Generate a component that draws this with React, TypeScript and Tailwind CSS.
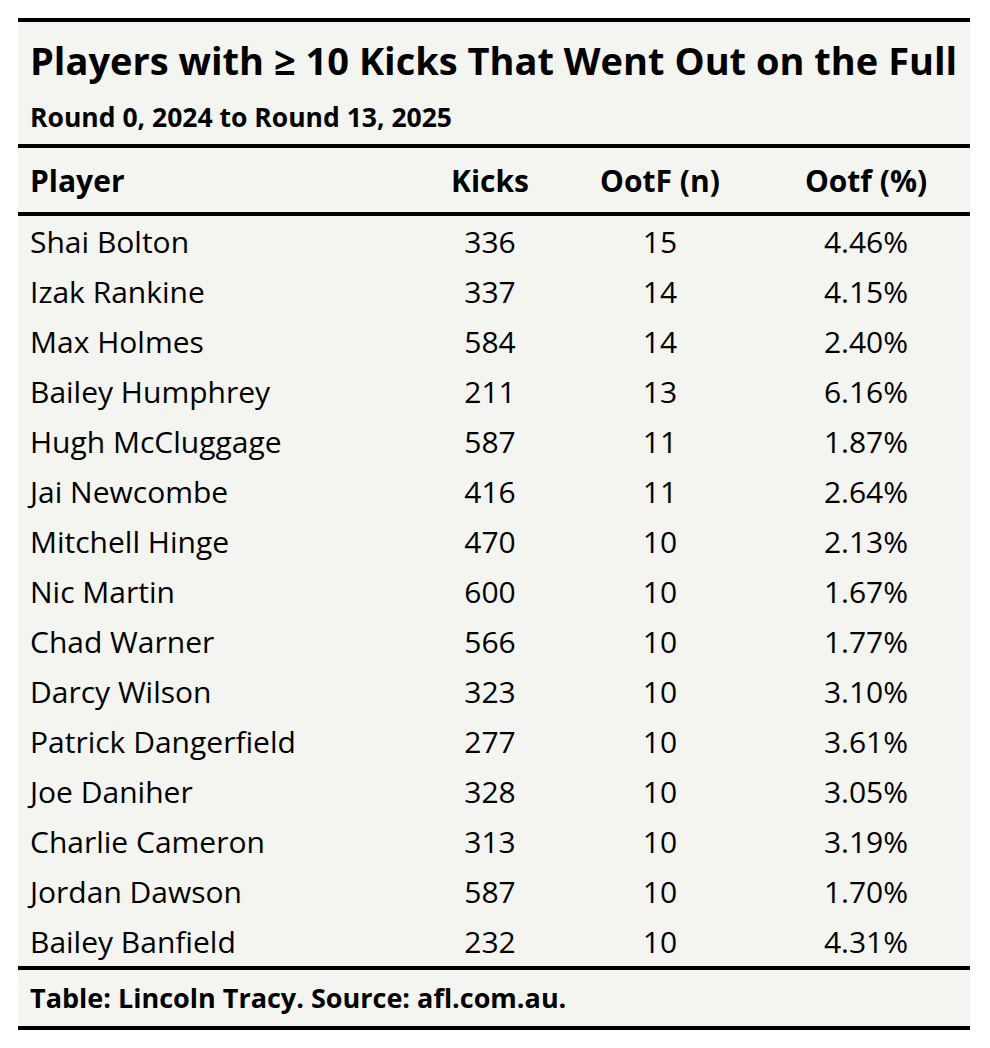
const rows: [string, number, number, string][] = [
  ['Shai Bolton', 336, 15, '4.46%'],
  ['Izak Rankine', 337, 14, '4.15%'],
  ['Max Holmes', 584, 14, '2.40%'],
  ['Bailey Humphrey', 211, 13, '6.16%'],
  ['Hugh McCluggage', 587, 11, '1.87%'],
  ['Jai Newcombe', 416, 11, '2.64%'],
  ['Mitchell Hinge', 470, 10, '2.13%'],
  ['Nic Martin', 600, 10, '1.67%'],
  ['Chad Warner', 566, 10, '1.77%'],
  ['Darcy Wilson', 323, 10, '3.10%'],
  ['Patrick Dangerfield', 277, 10, '3.61%'],
  ['Joe Daniher', 328, 10, '3.05%'],
  ['Charlie Cameron', 313, 10, '3.19%'],
  ['Jordan Dawson', 587, 10, '1.70%'],
  ['Bailey Banfield', 232, 10, '4.31%'],
];

const cols = 'grid grid-cols-[404px_136px_204px_208px]';

export default function App() {
  return (
    <div className="min-h-screen bg-white pt-[18px] px-[18px] font-['Open_Sans',sans-serif] text-black">
      <div className="w-[952px] bg-[#f4f4f0] border-y-4 border-black">
        {/* heading */}
        <div className="px-3 pt-[18px] pb-[13px] border-b-4 border-black">
          <h1 className="text-[38px] leading-[40px] font-bold whitespace-nowrap">
            Players with ≥ 10 Kicks That Went Out on the Full
          </h1>
          <p className="mt-[23px] text-[26.5px] leading-[28px] font-bold">
            Round 0, 2024 to Round 13, 2025
          </p>
        </div>

        {/* column labels */}
        <div className={`${cols} h-[68px] items-center border-b-4 border-black text-[30px] font-bold`}>
          <div className="px-3">Player</div>
          <div className="text-center">Kicks</div>
          <div className="text-center">OotF (n)</div>
          <div className="text-center">Ootf (%)</div>
        </div>

        {/* body */}
        <div className="border-b-4 border-black">
          {rows.map(([name, kicks, n, pct]) => (
            <div key={name} className={`${cols} h-[50px] items-center text-[30px]`}>
              <div className="px-3 whitespace-nowrap">{name}</div>
              <div className="text-center">{kicks}</div>
              <div className="text-center">{n}</div>
              <div className="text-center">{pct}</div>
            </div>
          ))}
        </div>

        {/* source note */}
        <div className="h-[56px] flex items-center px-3 text-[27px] font-bold">
          Table: Lincoln Tracy. Source: afl.com.au.
        </div>
      </div>
    </div>
  );
}
